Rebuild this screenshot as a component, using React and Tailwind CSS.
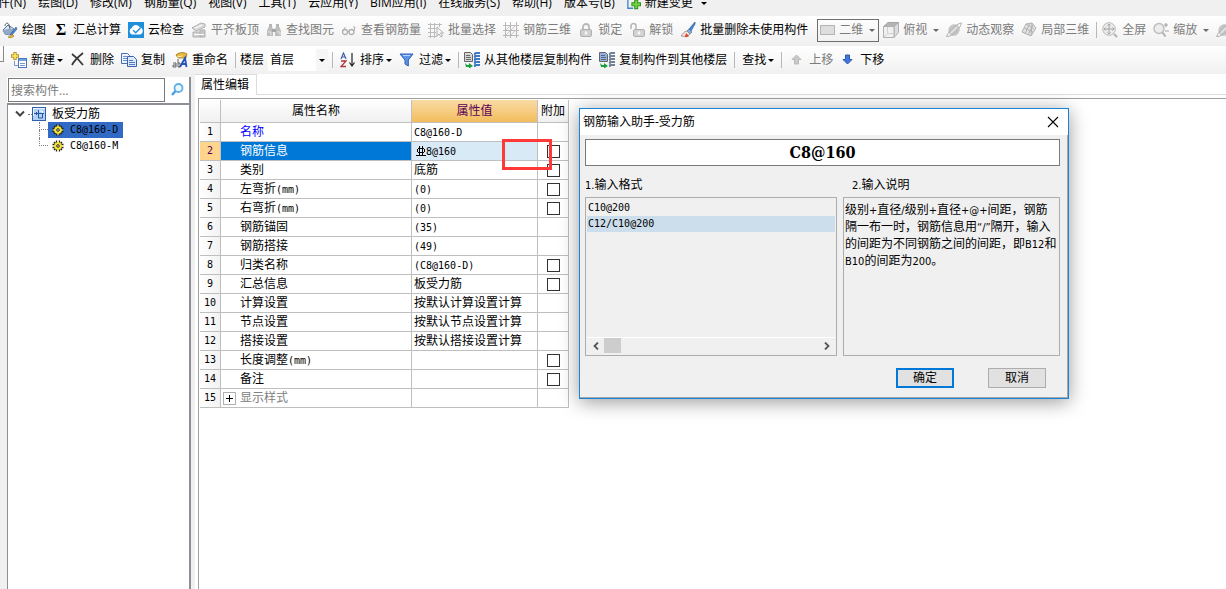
import React from 'react';

const Svg = ({ children, className = 'w-4 h-4' }) => (
    <svg viewBox="0 0 16 16" className={`${className} shrink-0`} fill="none" aria-hidden="true">
        {children}
    </svg>
);

/* ---------- Toolbar icons ---------- */

const PaintIcon = () => (
    <Svg>
        <path d="M1 8l5-5 6 4-4 6-5-1z" fill="#dbe4f0" stroke="#5b7088" />
        <path d="M3 4c0-3 3-4 4-1l1 4" stroke="#4b6078" />
        <path d="M1 8l5-1 6 0-4 6-5-1z" fill="#8fa9c8" />
        <path d="M14 5l1 2-5 6-2 0z" fill="#4a7fd0" stroke="#2d5ca8" strokeWidth=".6" />
        <path d="M10 12l2 2c-2 2-4 2-6 1 2 0 3-1 4-3z" fill="#efc02f" stroke="#8a6a10" strokeWidth=".6" />
    </Svg>
);

const CloudCheckIcon = () => (
    <Svg>
        <path d="M0 0h16v16H0z" fill="#1f8fdb" />
        <path d="M4.500 12.500a3.300 3.300 0 01-.6-6.400A4.300 4.300 0 0112 5.500a3.600 3.600 0 010 7z" fill="#fff" />
        <path d="M5.200 8.300l2.500 2.400L12.400 6" stroke="#1f8fdb" strokeWidth="1.500" />
    </Svg>
);

const SlabIcon = () => (
    <Svg>
        <path d="M1 6l9-5 4 1v3L5 9z" fill="#dadada" stroke="#b0b0b0" />
        <path d="M2 10h8v5H2z" fill="#d2d2d2" stroke="#b0b0b0" />
        <path d="M9 8h5v7H9z" fill="#c6c6c6" stroke="#b0b0b0" />
        <path d="M3 12.500h10" stroke="#fff" />
        <path d="M4 6l7-3" stroke="#fff" />
    </Svg>
);

const BinocularsIcon = () => (
    <Svg>
        <path d="M3 2h3v3H3zM10 2h3v3h-3z" fill="#b5b5b5" />
        <path d="M2.500 5H6l1 2v7H1V9zM10 5h3.500L15 9v5H9V7z" fill="#bdbdbd" />
        <path d="M6 7h4v3H6z" fill="#a5a5a5" />
        <path d="M2 10h3v3M11 10h3v3" stroke="#e8e8e8" />
    </Svg>
);

const GlassesIcon = () => (
    <Svg>
        <circle cx="4" cy="10" r="2.500" stroke="#b0b0b0" strokeWidth="1.300" />
        <circle cx="10.500" cy="10" r="2.500" stroke="#b0b0b0" strokeWidth="1.300" />
        <path d="M6.500 9.500h1.500M1.500 9l3-4M13 9l1-4-2 0" stroke="#b0b0b0" />
    </Svg>
);

const GridSelectIcon = () => (
    <Svg>
        <path d="M0 2.500h14M0 6.500h8M0 10.500h8M0 14.500h9M2.500 1v15M6.500 1v15M11.500 1v4" stroke="#bcbcbc" />
        <path d="M9 5v9l2-2 2 3 1.500-1-2-3h3z" fill="#f5f5f5" stroke="#a0a0a0" strokeWidth=".8" />
    </Svg>
);

const Grid3DIcon = () => (
    <Svg>
        <path d="M0 3.500h16M0 8.500h16M0 13.500h16M2.500 0v16M7.500 0v16M13.500 0v16" stroke="#b8b8b8" />
        <path d="M3 8l5-5M3 13l10-10M8 13l5-5" stroke="#c6c6c6" />
    </Svg>
);

const LockIcon = () => (
    <Svg>
        <path d="M5 8V5a3 3 0 016 0v3" stroke="#b8b8b8" strokeWidth="1.800" />
        <rect x="2.500" y="7.500" width="11" height="7" rx="1.500" fill="#cfcfcf" stroke="#b0b0b0" />
        <path d="M8 9v4M6.500 11h3" stroke="#fff" />
    </Svg>
);

const UnlockIcon = () => (
    <Svg>
        <path d="M2 7V4a2.500 2.500 0 015 0v4" stroke="#b8b8b8" strokeWidth="1.600" />
        <rect x="4.500" y="7.500" width="11" height="7" rx="1.500" fill="#d2d2d2" stroke="#b0b0b0" />
        <path d="M10 9v4M8.500 11h3" stroke="#fff" />
    </Svg>
);

const BrushIcon = () => (
    <Svg>
        <path d="M15 0l-6 7 2 2 4-7z" fill="#3f86d8" stroke="#2d5f9e" strokeWidth=".7" />
        <path d="M9 7L7 9l3 3 2-2z" fill="#7fb0e8" stroke="#5b7088" strokeWidth=".7" />
        <path d="M7 9c-3 0-4 3-6 5 3 1 7 0 9-2z" fill="#f3e6dc" stroke="#8c7a74" strokeWidth=".7" />
        <path d="M6 11l3 3c-1 1-3 1.500-4 1z" fill="#d8402f" />
    </Svg>
);

const FlatIcon = () => (
    <Svg>
        <rect x="1.500" y="3.500" width="14" height="9" fill="#dedede" stroke="#b4b4b4" />
    </Svg>
);

const CubeIcon = () => (
    <Svg>
        <path d="M.5 4.500L5 .5h10.500L11 4.500z" fill="#b4b4b4" stroke="#a6a6a6" />
        <path d="M11 4.500l4.500-4v10l-4.500 5z" fill="#dcdcdc" stroke="#b0b0b0" />
        <path d="M.5 4.500H11v11H.5z" fill="#f0f0f0" stroke="#b0b0b0" />
        <path d="M4.500 5v6.500H11M4 12l-3 3" stroke="#d0d0d0" />
    </Svg>
);

const OrbitIcon = () => (
    <Svg>
        <ellipse cx="8" cy="8" rx="5.500" ry="6" transform="rotate(35 8 8)" fill="#c6c6c6" />
        <path d="M15.500 1C12 1 3 8 .5 14.500c3 1 13-5 15-13.500z" stroke="#b4b4b4" />
        <path d="M5 11l6-6" stroke="#e6e6e6" strokeWidth="1.300" />
    </Svg>
);

const Local3DIcon = () => (
    <Svg>
        <path d="M5 2l6-1 4 5-5 8-9-4z" fill="#e4e4e4" stroke="#b0b0b0" />
        <path d="M8.500 2L4 12M3 6l9 4M12 3l-5 10M5 2l8 5M11 1l-1 12" stroke="#b0b0b0" />
    </Svg>
);

const FullScreenIcon = () => (
    <Svg>
        <circle cx="7" cy="7" r="6.300" fill="#ebebeb" stroke="#b8b8b8" />
        <path d="M7 2v10M2 7h10M5.500 3.500L7 2l1.500 1.500M5.500 10.500L7 12l1.500-1.500M3.500 5.500L2 7l1.500 1.500M10.500 5.500L12 7l-1.500 1.500" stroke="#a4a4a4" />
        <path d="M12 12l3 3" stroke="#b0b0b0" strokeWidth="2" />
    </Svg>
);

const ZoomIcon = () => (
    <Svg>
        <circle cx="6" cy="6.500" r="5" fill="#ededed" stroke="#bcbcbc" strokeWidth="1.400" />
        <path d="M9.500 10.500l3 4" stroke="#b0b0b0" strokeWidth="2" />
        <path d="M11 3h4M13 1v4M12 9h4" stroke="#a6a6a6" strokeWidth="1.200" />
    </Svg>
);

const NewIcon = () => (
    <Svg>
        <path d="M4 0v8M0 4h8" stroke="#b9972a" strokeWidth="3.400" />
        <path d="M4 1v6M1 4h6" stroke="#ffe96b" strokeWidth="1.600" />
        <rect x="7.500" y="6.500" width="8" height="9" fill="#fff" stroke="#4a78b8" />
        <path d="M8 8h7" stroke="#6fa3e0" strokeWidth="2" />
        <path d="M9 11.500h5M9 13.500h5M3.500 9v4.500H7" stroke="#7a9ac4" />
    </Svg>
);

const DeleteIcon = () => (
    <Svg>
        <path d="M2 2c4 3 8 7 11 11M13 1C8 5 4 9 2 13" stroke="#3a3a3a" strokeWidth="1.800" />
    </Svg>
);

const CopyIcon = () => (
    <Svg>
        <path d="M.5 1.500h6l2 2v8h-8z" fill="#eef4fd" stroke="#4a6fb5" />
        <path d="M2 4.500h4M2 6.500h5M2 8.500h5" stroke="#6f93d0" />
        <path d="M6.500 4.500h6l3 3v7h-9z" fill="#dce9fb" stroke="#3c62ad" />
        <path d="M8 8.500h4M8 10.500h6M8 12.500h6" stroke="#4f7cc8" />
    </Svg>
);

const RenameIcon = () => (
    <Svg>
        <path d="M4 3c3-3 8-3 11-1l-1 4H6z" fill="#e8b93c" stroke="#8d6a19" strokeWidth=".7" />
        <path d="M5 5l5-1" stroke="#fff2b8" />
        <path d="M1 11h3v4H1v-2h3M6 7v8h2v-4H6" stroke="#555" strokeWidth=".9" />
        <path d="M8 15l5-9 1.500 9M10 12h4" stroke="#2454b8" strokeWidth="1.800" />
    </Svg>
);

const SortIcon = () => (
    <Svg>
        <path d="M1 7l2.500-6L6 7M2 5h3" stroke="#3f62ad" strokeWidth="1.200" />
        <path d="M1 9h5l-5 5.500h5" stroke="#b0373a" strokeWidth="1.300" />
        <path d="M12 1v12M9.500 10.500L12 14l2.500-3.500" stroke="#222" strokeWidth="1.200" />
    </Svg>
);

const FilterIcon = () => (
    <Svg>
        <path d="M1 2h13L9.300 8v6l-3.300-2V8z" fill="#5d92e6" stroke="#2e5fb5" />
        <path d="M4 3.500h7" stroke="#b7d3fa" />
    </Svg>
);

const FloorCopyIcon = ({ tint, page }) => (
    <Svg>
        <path d="M.5 .5h6l2 2v7h-8z" fill={page} stroke="#666" />
        <path d="M2 3.500h4M2 5.500h5M2 7.500h5" stroke="#666" />
        <path d="M1 11l2 2h2v-2l4 3-4 2.500V15H2z" fill="#18a03a" />
        <path d="M10 2l2-1h4M10 5l2-1h4M10 8l2-1h4M10 11l2-1h4M10 14l2-1h4" stroke={tint} strokeWidth="1.800" />
        <path d="M11 1v14" stroke={tint} strokeWidth="1.500" />
    </Svg>
);

const ArrowIcon = ({ up, fill, stroke }) => (
    <Svg>
        <path d={up ? 'M7.500 3L3 7.500h2.500V12h4V7.500H12z' : 'M7.500 12L3 7.500h2.500V3h4v4.500H12z'} fill={fill} stroke={stroke} />
    </Svg>
);

const NewChangeIcon = () => (
    <Svg className="w-3.5 h-3.5">
        <path d="M1 0v14h6M1 1h10" stroke="#3f86c8" strokeWidth="1.500" />
        <path d="M10.500 4v11M5 9.500h11" stroke="#2d8c1c" strokeWidth="4.600" />
        <path d="M10.500 5v9M6 9.500h9" stroke="#6fd03e" strokeWidth="2.600" />
    </Svg>
);

const SearchIcon = () => (
    <Svg>
        <circle cx="9.500" cy="6" r="4" fill="#eaf6fe" stroke="#5fb0e4" strokeWidth="1.800" />
        <path d="M6.500 9L3 13" stroke="#4a9fdb" strokeWidth="2.400" />
    </Svg>
);

const SlabRebarIcon = () => (
    <svg viewBox="0 0 14 14" className="w-3.5 h-3.5 shrink-0" fill="none" aria-hidden="true">
        <rect x=".5" y=".5" width="13" height="13" fill="#b4d0f4" stroke="#2f5fae" />
        <path d="M1 1.500h12M1.500 1v8" stroke="#e8f2fd" />
        <path d="M2 6.500h10M6.500 3v8h4V7M4.500 5v3" stroke="#2457a8" />
        <path d="M7.500 4h3v2" stroke="#fff" />
    </svg>
);

const GearIcon = () => (
    <svg viewBox="0 0 12 12" className="w-3 h-3 shrink-0" fill="none" aria-hidden="true">
        <path d="M4.500 .5v11M7.500 .5v11M.5 4.500h11M.5 7.500h11M2 2l8 8M10 2l-8 8" stroke="#222" strokeWidth="1.300" />
        <circle cx="6" cy="6" r="3.800" fill="#f4e52a" />
        <path d="M6 1v3M6 8v3M1 6h3M8 6h3" stroke="#f4e52a" />
        <circle cx="6" cy="6" r="1.300" fill="#fff" stroke="#222" />
    </svg>
);

const RebarGradeIcon = () => (
    <svg viewBox="0 0 10 10" className="ml-0.5 size-2.5 shrink-0" fill="none" shapeRendering="crispEdges" aria-label="C">
        <path d="M3.500 0v9M6.500 0v9M2 2.500h6M2 6.500h6M1.500 3v3M8.500 3v3M0 9.500h10" stroke="#000" />
    </svg>
);

/* ---------- Shared pieces ---------- */

const Caret = ({ className = 'border-t-black' }) => (
    <span className={`w-0 h-0 shrink-0 border-x-3 border-x-transparent border-t-3 ${className}`}></span>
);

const Sep = ({ className = '' }) => <span className={`w-px h-4 shrink-0 bg-[#b8b8b8] ${className}`}></span>;

const Tool = ({ icon, label, disabled, caret }) => (
    <button className={`flex shrink-0 items-center gap-1 ${disabled ? 'text-[#7c7c7c]' : 'text-black'}`} disabled={disabled}>
        {icon}
        <span>{label}</span>
        {caret && <Caret className="-ml-0.5 border-t-black" />}
    </button>
);

// Latin runs are set smaller than the Chinese text around them
const Mixed = ({ text, className }) =>
    text.split(/([\x20-\x7e“”]+)/).map((part, i) =>
        i % 2 ? <span key={i} className={`${className} leading-none`}>{part}</span> : part
    );

const MONO = "font-['DejaVu_Sans_Mono',monospace] text-[10px]";
const SANS = "font-['DejaVu_Sans_Condensed','DejaVu_Sans',sans-serif] text-[11px]";

const menus = ['文件(N)', '绘图(D)', '修改(M)', '钢筋量(Q)', '视图(V)', '工具(T)', '云应用(Y)', 'BIM应用(I)', '在线服务(S)', '帮助(H)', '版本号(B)'];

const rows = [
    { name: '名称', value: 'C8@160-D', link: true },
    { name: '钢筋信息', value: '8@160', check: true, selected: true },
    { name: '类别', value: '底筋', check: true },
    { name: '左弯折(mm)', value: '(0)', check: true },
    { name: '右弯折(mm)', value: '(0)', check: true },
    { name: '钢筋锚固', value: '(35)' },
    { name: '钢筋搭接', value: '(49)' },
    { name: '归类名称', value: '(C8@160-D)', check: true },
    { name: '汇总信息', value: '板受力筋', check: true },
    { name: '计算设置', value: '按默认计算设置计算' },
    { name: '节点设置', value: '按默认节点设置计算' },
    { name: '搭接设置', value: '按默认搭接设置计算' },
    { name: '长度调整(mm)', value: '', check: true },
    { name: '备注', value: '', check: true },
    { name: '显示样式', value: '', group: true },
];

const MenuBar = () => (
    <nav className="flex h-4 items-end gap-3 overflow-hidden bg-[#f0f0f0] pb-[5px]">
        <div className="-ml-3.5 flex shrink-0 gap-3">
            {menus.map((m) => (
                <button key={m} className="shrink-0 leading-4">{m}</button>
            ))}
        </div>
        <button className="flex shrink-0 items-center gap-1 leading-4">
            <NewChangeIcon />
            <span>新建变更</span>
            <span className="pl-1"><Caret className="block border-t-black" /></span>
        </button>
    </nav>
);

const ViewToolbar = () => (
    <div className="flex h-[30px] items-center gap-[7px] overflow-hidden bg-gradient-to-b from-white to-[#f0f0f0] pb-0.5 pl-0.5">
        <Tool icon={<PaintIcon />} label="绘图" />
        <Tool icon={<span className="w-4 text-center font-['Liberation_Serif',serif] text-base font-bold leading-4">Σ</span>} label="汇总计算" />
        <Tool icon={<CloudCheckIcon />} label="云检查" />
        <Tool icon={<SlabIcon />} label="平齐板顶" disabled />
        <Tool icon={<BinocularsIcon />} label="查找图元" disabled />
        <Tool icon={<GlassesIcon />} label="查看钢筋量" disabled />
        <Tool icon={<GridSelectIcon />} label="批量选择" disabled />
        <Tool icon={<Grid3DIcon />} label="钢筋三维" disabled />
        <Tool icon={<LockIcon />} label="锁定" disabled />
        <Tool icon={<UnlockIcon />} label="解锁" disabled />
        <Tool icon={<BrushIcon />} label="批量删除未使用构件" />
        <button className="ml-0.5 flex h-[23px] w-[62px] shrink-0 items-center gap-1 border border-[#6e6e6e] pl-px text-[#7c7c7c]" disabled>
            <FlatIcon />
            <span>二维</span>
            <span className="pl-0.5"><Caret className="block border-t-[#6a6a6a]" /></span>
        </button>
        <div className="-ml-[3px] flex shrink-0 items-center gap-1.5">
            <Tool icon={<CubeIcon />} label="俯视" disabled />
            <Caret className="border-t-[#6a6a6a]" />
        </div>
        <Tool icon={<OrbitIcon />} label="动态观察" disabled />
        <Tool icon={<Local3DIcon />} label="局部三维" disabled />
        <Sep className="-mr-0.5" />
        <Tool icon={<FullScreenIcon />} label="全屏" disabled />
        <div className="flex shrink-0 items-center gap-1.5">
            <Tool icon={<ZoomIcon />} label="缩放" disabled />
            <Caret className="border-t-[#6a6a6a]" />
        </div>
        <OrbitIcon />
    </div>
);

const EditToolbar = () => (
    <div className="flex h-7 items-center gap-[7px] overflow-hidden bg-gradient-to-b from-white to-[#f0f0f0]">
        <span className="h-4 w-1 shrink-0 self-start border-r border-b border-[#8a8a8a]"></span>
        <Tool icon={<NewIcon />} label="新建" caret />
        <Tool icon={<DeleteIcon />} label="删除" />
        <Tool icon={<CopyIcon />} label="复制" />
        <Tool icon={<RenameIcon />} label="重命名" />
        <div className="flex shrink-0 items-center gap-1">
            <Sep />
            <label htmlFor="floor">楼层</label>
            <div className="relative flex items-center">
                <select id="floor" className="h-[22px] w-[60px] appearance-none bg-white pl-0.5">
                    <option>首层</option>
                </select>
                <span className="pointer-events-none absolute right-0 flex h-[22px] w-3 items-center justify-center bg-[#f6f6f6]">
                    <Caret />
                </span>
            </div>
            <Sep />
        </div>
        <Tool icon={<SortIcon />} label="排序" caret />
        <Tool icon={<FilterIcon />} label="过滤" caret />
        <Sep className="-mr-0.5" />
        <Tool icon={<FloorCopyIcon tint="#3f79c4" page="#d8d8d8" />} label="从其他楼层复制构件" />
        <Tool icon={<FloorCopyIcon tint="#6f8296" page="#8db4ea" />} label="复制构件到其他楼层" />
        <Sep />
        <Tool label="查找" caret />
        <Sep />
        <Tool icon={<ArrowIcon up fill="#c9c9c9" stroke="#b9b9b9" />} label="上移" disabled />
        <Tool icon={<ArrowIcon fill="#3f78dc" stroke="#2a57b0" />} label="下移" />
    </div>
);

const ComponentTree = () => (
    <aside className="flex w-[184px] shrink-0 flex-col border-r-2 border-[#8c9096] bg-white">
        <div className="flex h-7 items-center gap-1 border-b-2 border-[#8c9096] pl-px">
            <input
                aria-label="搜索构件"
                placeholder="搜索构件..."
                className="h-6 w-[157px] border border-[#7a7a7a] bg-white pl-0.5 placeholder:text-[#7a7a7a]"
            />
            <button aria-label="搜索"><SearchIcon /></button>
        </div>
        <div className="flex-1 border-l border-[#8c9096] pt-px">
            <div className="flex h-4 items-center pl-1.5">
                <svg viewBox="0 0 12 8" className="h-2 w-3 shrink-0" fill="none" aria-hidden="true">
                    <path d="M2 1.500l4 4 4-4" stroke="#444" strokeWidth="2" />
                </svg>
                <span className="ml-0.5 w-1 border-t border-dotted border-[#808080]"></span>
                <SlabRebarIcon />
                <span className="pl-1.5">板受力筋</span>
            </div>
            <ul className="ml-[31px]">
                {['C8@160-D', 'C8@160-M'].map((item, i) => (
                    <li key={item} className="flex h-4 items-center">
                        <span className="h-4 w-[9px] shrink-0">
                            <span className="block h-2 border-b border-l border-dotted border-[#808080]"></span>
                            {i === 0 && <span className="block h-2 border-l border-dotted border-[#808080]"></span>}
                        </span>
                        <span className={`flex h-4 w-[75px] items-center gap-1.5 pl-1 ${MONO} ${i === 0 ? 'bg-[#316ac5]' : ''}`}>
                            <GearIcon />
                            {item}
                        </span>
                    </li>
                ))}
            </ul>
        </div>
    </aside>
);

const headCell = 'h-[23px] border-r border-b border-[#bfbfbf] p-0 font-normal';
const cell = 'h-[19px] border-r border-b border-[#bfbfbf] p-0 leading-[18px]';

const PropertyTable = () => (
    <table className="w-[369px] table-fixed border-separate border-spacing-0">
        <colgroup>
            <col className="w-[21px]" />
            <col className="w-[191px]" />
            <col className="w-[126px]" />
            <col className="w-[31px]" />
        </colgroup>
        <thead>
            <tr>
                <th className={`${headCell} bg-gradient-to-b from-white to-[#f0f0f0]`}></th>
                <th className={`${headCell} bg-gradient-to-b from-white to-[#f0f0f0]`}>属性名称</th>
                <th className={`${headCell} bg-gradient-to-b from-[#f9dba3] to-[#f2bd5b] text-[#5a0058]`}>属性值</th>
                <th className={`${headCell} bg-gradient-to-b from-white to-[#f0f0f0]`}>附加</th>
            </tr>
        </thead>
        <tbody>
            {rows.map((row, i) => (
                <tr key={row.name}>
                    <td className={`${cell} text-center ${MONO} ${row.selected ? 'bg-[#ffd48c] text-[#5a0058]' : 'bg-gradient-to-r from-white to-[#f2f2f2]'}`}>
                        {i + 1}
                    </td>
                    <td className={`${cell} ${row.selected ? 'bg-[#0078d7] text-white' : row.link ? 'text-[#0000ff]' : row.group ? 'text-[#808080]' : ''}`}>
                        <span className="flex h-[18px] items-center">
                            <span className="flex w-[19px] shrink-0 pl-0.5">
                                {row.group && (
                                    <button aria-label="展开" className="flex size-[13px] items-center justify-center border border-[#b0b0b0] bg-white">
                                        <svg viewBox="0 0 7 7" className="size-[7px]" aria-hidden="true">
                                            <path d="M3.500 0v7M0 3.500h7" stroke="#000" />
                                        </svg>
                                    </button>
                                )}
                            </span>
                            <span><Mixed text={row.name} className={MONO} /></span>
                        </span>
                    </td>
                    <td className={`${cell} ${row.selected ? 'bg-[#d9eaf7]' : ''}`}>
                        <span className="flex h-[18px] items-center pl-0.5">
                            {row.selected && <RebarGradeIcon />}
                            <span><Mixed text={row.value} className={MONO} /></span>
                        </span>
                    </td>
                    <td className={cell}>
                        {row.check && (
                            <input type="checkbox" aria-label={`附加 ${row.name}`} className="mx-auto block size-[13px] appearance-none border border-[#333] bg-white" />
                        )}
                    </td>
                </tr>
            ))}
        </tbody>
    </table>
);

const InputHelper = () => (
    <div role="dialog" aria-labelledby="helper-title" className="absolute top-[34px] left-[579px] w-[490px] border border-[#1883d7] bg-[#f0f0f0] shadow-[0_3px_18px_rgba(0,0,0,0.4)]">
        <div className="flex h-[26px] items-center justify-between bg-white pr-2 pl-[3px]">
            <h2 id="helper-title">钢筋输入助手-受力筋</h2>
            <button aria-label="关闭">
                <svg viewBox="0 0 14 14" className="h-3.5 w-3.5" fill="none" aria-hidden="true">
                    <path d="M2 2l10 10M12 2L2 12" stroke="#000" strokeWidth="1.100" />
                </svg>
            </button>
        </div>
        <div className="border-r border-b border-[#a8a8a8] pt-1 pr-[7px] pb-[9px] pl-[5px]">
            <input
                aria-label="钢筋信息"
                defaultValue="C8@160"
                className="block h-[27px] w-full border border-[#7a7a7a] bg-white text-center font-['DejaVu_Serif_Condensed','DejaVu_Serif',serif] text-base font-bold"
            />
            <div className="mt-2.5 flex gap-1.5">
                <section className="w-[252px]">
                    <h3 className="h-[21px] leading-[18px]"><Mixed text="1.输入格式" className={SANS} /></h3>
                    <div className="flex h-[159px] flex-col border border-[#adadad] p-px">
                        <ul className={`flex-1 ${MONO}`}>
                            <li className="h-[17px] pl-px leading-[18px]">C10@200</li>
                            <li className="h-4 bg-[#ccdeec] pl-px leading-4">C12/C10@200</li>
                        </ul>
                        <div className="flex h-[17px] items-start border-t border-white">
                            <button aria-label="向左滚动" className="flex h-[15px] w-[17px] items-center justify-center">
                                <svg viewBox="0 0 8 8" className="h-2 w-2" fill="none" aria-hidden="true">
                                    <path d="M6 .5L2.500 4 6 7.500" stroke="#555" strokeWidth="1.800" />
                                </svg>
                            </button>
                            <span className="h-[15px] w-[17px] bg-[#cdcdcd]"></span>
                            <button aria-label="向右滚动" className="ml-auto flex h-[15px] w-[17px] items-center justify-center">
                                <svg viewBox="0 0 8 8" className="h-2 w-2" fill="none" aria-hidden="true">
                                    <path d="M2 .5L5.500 4 2 7.500" stroke="#555" strokeWidth="1.800" />
                                </svg>
                            </button>
                        </div>
                    </div>
                </section>
                <section className="flex-1">
                    <h3 className="h-[21px] pl-[9px] leading-[18px]"><Mixed text="2.输入说明" className={SANS} /></h3>
                    <div className="h-[159px] border border-[#adadad] pt-[3px] pl-px leading-[17px]">
                        <Mixed text="级别+直径/级别+直径+@+间距，钢筋" className={SANS} />
                        <br />
                        <Mixed text="隔一布一时，钢筋信息用“/”隔开，输入" className={SANS} />
                        <br />
                        <Mixed text="的间距为不同钢筋之间的间距，即B12和" className={SANS} />
                        <br />
                        <Mixed text="B10的间距为200。" className={SANS} />
                    </div>
                </section>
            </div>
            <div className="mt-3 flex justify-end gap-[34px] pr-3.5">
                <button className="h-5 w-[58px] border-2 border-[#0078d7] bg-[#e1e1e1] leading-4">确定</button>
                <button className="h-5 w-[58px] border border-[#adadad] bg-[#e1e1e1] leading-[18px]">取消</button>
            </div>
        </div>
    </div>
);

const App = () => {
    return (
        <div className="flex min-h-screen flex-col overflow-hidden bg-[#f0f0f0] font-['Open_Sans','Noto_Sans_CJK_SC',sans-serif] text-xs whitespace-nowrap text-black">
            <MenuBar />
            <ViewToolbar />
            <EditToolbar />

            <main className="relative flex flex-1">
                <div className="flex shrink-0 pt-[3px] pr-1 pl-[7px]">
                    <ComponentTree />
                </div>

                {/* Property editor */}
                <section className="flex flex-1 flex-col bg-white">
                    <div className="flex h-[21px]">
                        <button className="border-t border-r border-[#dcdcdc] pr-[7px] pl-1.5">属性编辑</button>
                        <span className="flex-1 border-b border-[#dcdcdc]"></span>
                    </div>
                    <div className="relative mt-[3px] ml-[3px] flex-1 border-t border-l border-[#a0a0a0] pt-px pl-px">
                        <PropertyTable />
                        {/* Highlight box over the value cell's edge */}
                        <span className="absolute top-10 left-[303px] h-[31px] w-[50px] border-3 border-[#ff3838]"></span>
                    </div>
                </section>

                <InputHelper />
            </main>
        </div>
    );
};

export default App;
